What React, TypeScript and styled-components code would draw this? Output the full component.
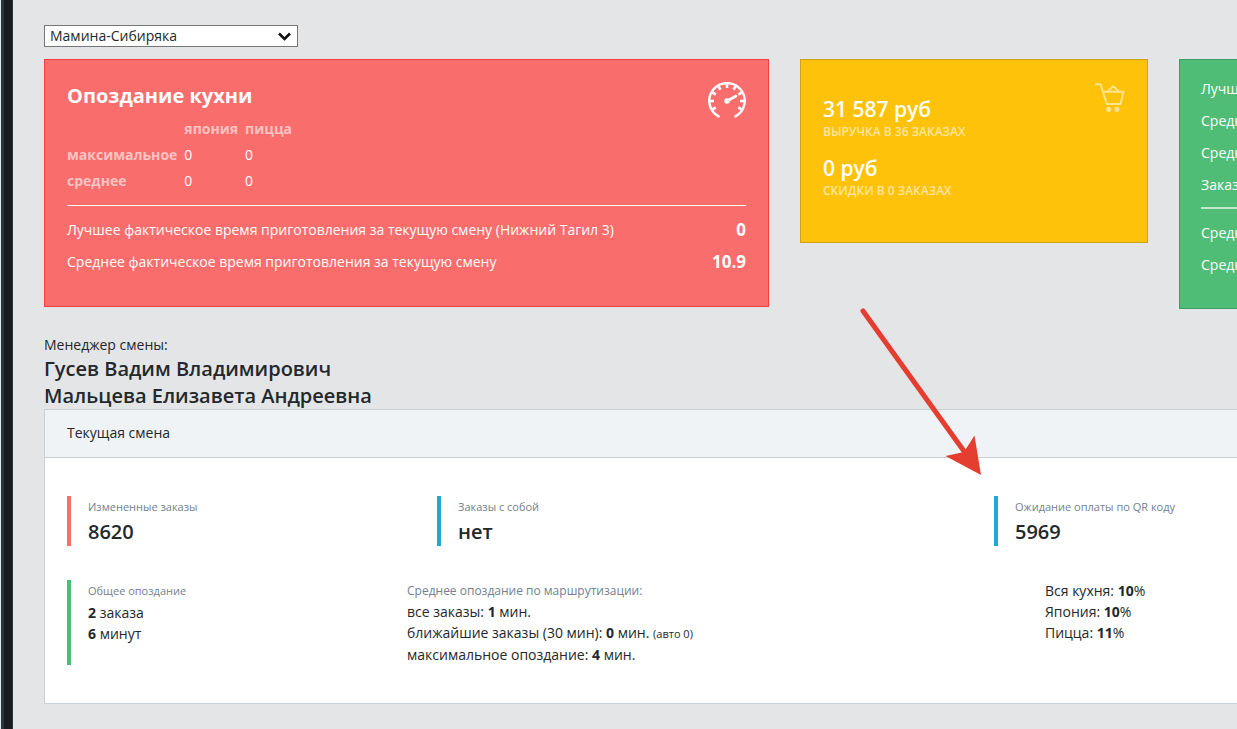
import React from "react";
import styled, { createGlobalStyle } from "styled-components";

const GlobalStyle = createGlobalStyle`
  *, *::before, *::after { box-sizing: border-box; }
  body {
    margin: 0;
    background: #e4e5e6;
    color: #23282c;
    font-family: "Open Sans", "Noto Sans", sans-serif;
    font-size: 14px;
    line-height: 21px;
    overflow-x: hidden;
  }
`;

const Page = styled.div`
  display: flex;
  min-height: 100vh;
`;

const SidebarEdge = styled.aside`
  flex: none;
  width: 13px;
  background: #181c20;
  border-left: 1px solid #e4e5e6;
  border-right: 1px solid #2f353a;
  box-shadow: inset 3px 0 0 #263640;
`;

const Main = styled.main`
  position: relative;
  flex: 1;
  min-width: 0;
  padding: 25px 0 25px 31px;
`;

const SelectBox = styled.div`
  position: relative;
  width: 254px;
  margin-bottom: 12px;
`;

const BranchSelect = styled.select`
  display: block;
  appearance: none;
  width: 100%;
  height: 22px;
  padding: 0 24px 0 5px;
  border: 1px solid #767676;
  border-radius: 0;
  background: #fff;
  color: #23282c;
  font: inherit;
  line-height: 20px;
`;

const Chevron = styled.svg`
  position: absolute;
  top: 7px;
  right: 7px;
  pointer-events: none;
`;

const Cards = styled.div`
  display: grid;
  grid-template-columns: minmax(0, 725fr) minmax(0, 348fr) minmax(0, 58fr);
  column-gap: 31px;
  align-items: start;
`;

const tones = {
  danger: { fill: "#f96d6c", edge: "#f5403e" },
  warning: { fill: "#ffc20a", edge: "#d2a11b" },
  success: { fill: "#4fbd75", edge: "#3e9f60" },
};

const Card = styled.section<{ $tone: keyof typeof tones; $open?: boolean }>`
  padding: 22px;
  border: 1px solid ${(p) => tones[p.$tone].edge};
  background: ${(p) => tones[p.$tone].fill};
  color: #fff;
  ${(p) => p.$open && "padding: 13px 0 27px 21px; border-right: 0; overflow: hidden;"}
`;

const CardTop = styled.div`
  display: flex;
  justify-content: space-between;
  align-items: flex-start;
`;

const CardTitle = styled.h2`
  margin: 0;
  font-size: 20px;
  line-height: 28px;
  font-weight: 700;
`;

const DelayTable = styled.table`
  border-collapse: collapse;
  margin-top: 6px;
  line-height: 26px;

  th, td {
    padding: 0 7px 0 0;
    text-align: left;
  }
  th {
    color: rgba(255, 255, 255, 0.6);
    font-weight: 700;
  }
`;

const Rule = styled.hr<{ $soft?: boolean }>`
  height: ${(p) => (p.$soft ? 2 : 1)}px;
  margin: ${(p) => (p.$soft ? 6 : 11)}px 0 8px;
  border: 0;
  background: ${(p) => (p.$soft ? "rgba(255, 255, 255, 0.65)" : "#fff")};
`;

const FactRow = styled.div`
  display: flex;
  justify-content: space-between;
  height: 32px;
  line-height: 32px;
  white-space: nowrap;

  strong {
    font-size: 17px;
    font-weight: 700;
  }
`;

const RedBody = styled.div`
  padding-bottom: 6px;
`;

const Money = styled.div`
  padding-bottom: 8px;

  strong {
    display: block;
    font-size: 21px;
    line-height: 26px;
    font-weight: 600;
  }
  span {
    display: block;
    color: rgba(255, 255, 255, 0.6);
    font-size: 12px;
    line-height: 20px;
    font-weight: 600;
    text-transform: uppercase;
  }
`;

const MoneyList = styled.div`
  display: grid;
  gap: 5px;
  padding: 14px 0 11px;
`;

const Managers = styled.section`
  margin-top: 25px;
`;

const ManagerName = styled.div`
  font-size: 20px;
  line-height: 27px;
  font-weight: 600;
`;

const Panel = styled.section`
  border: 1px solid #c8d0d5;
  border-right: 0;
  background: #fff;
`;

const PanelHeader = styled.header`
  padding: 11px 22px 13px;
  border-bottom: 1px solid #c8d0d5;
  background: #f0f3f5;
  line-height: 23px;
`;

const PanelBody = styled.div`
  padding: 38px 0 38px 22px;
`;

const StatRow = styled.div<{ $columns: string }>`
  display: grid;
  grid-template-columns: ${(p) => p.$columns};
  align-items: start;

  & + & {
    margin-top: 34px;
  }
`;

const Callout = styled.div<{ $color: string; $tall?: boolean }>`
  border-left: 4px solid ${(p) => p.$color};
  padding-left: 17px;
  min-height: ${(p) => (p.$tall ? 85 : 50)}px;
`;

const Label = styled.div`
  color: #73818f;
  font-size: 11px;
  line-height: 22px;
`;

const Value = styled.div`
  font-size: 20px;
  line-height: 27px;
  font-weight: 600;
`;

const Note = styled.div`
  color: #73818f;
  font-size: 12px;
`;

const Line = styled.div`
  white-space: nowrap;

  small {
    font-size: 11px;
  }
`;

const Pointer = styled.svg`
  position: absolute;
  top: 306px;
  left: 845px;
  pointer-events: none;
`;

const GaugeIcon = () => (
  <svg width="38" height="38" viewBox="1 0 38 38" fill="none" stroke="#fff" aria-hidden="true">
    <path d="M11.6 34.4A17.7 17.7 0 1 1 28.4 34.4" strokeWidth="2.4" strokeLinecap="round" />
    <g strokeWidth="2.6">
      {[-120, -90, -60, -30, 0, 30, 60, 90, 120].map((a) => (
        <path key={a} d="M20 2v4" transform={`rotate(${a} 20 19)`} />
      ))}
    </g>
    <path d="M20 19l9-5" strokeWidth="2.6" strokeLinecap="round" />
    <circle cx="20" cy="19" r="2.8" fill="#fff" stroke="none" />
  </svg>
);

const CartIcon = () => (
  <svg width="31" height="31" viewBox="0 0 31 31" fill="none" stroke="#ffe38f" strokeWidth="1.9" aria-hidden="true">
    <path d="M1.4 2.3h5.2L12.8 22h13.8l2.8-12.200H9.2M13.2 9.600l6-5.400 6 5.400" strokeLinejoin="round" strokeLinecap="round" />
    <circle cx="14.7" cy="27.300" r="2.600" fill="#ffe38f" stroke="none" />
    <circle cx="22.800" cy="27.300" r="2.600" fill="#ffe38f" stroke="none" />
  </svg>
);

export default function App() {
  return (
    <>
      <GlobalStyle />
      <Page>
        <SidebarEdge />
        <Main>
          <SelectBox>
            <BranchSelect aria-label="Филиал" defaultValue="1">
              <option value="1">Мамина-Сибиряка</option>
            </BranchSelect>
            <Chevron width="13" height="9" viewBox="0 0 13 9" fill="none" stroke="#111" strokeWidth="2.6" aria-hidden="true">
              <path d="M1 1.5l5.5 5.5L12 1.5" />
            </Chevron>
          </SelectBox>

          <Cards>
            <Card $tone="danger">
              <RedBody>
                <CardTop>
                  <div>
                    <CardTitle>Опоздание кухни</CardTitle>
                    <DelayTable>
                      <thead>
                        <tr><td /><th scope="col">япония</th><th scope="col">пицца</th></tr>
                      </thead>
                      <tbody>
                        <tr><th scope="row">максимальное</th><td>0</td><td>0</td></tr>
                        <tr><th scope="row">среднее</th><td>0</td><td>0</td></tr>
                      </tbody>
                    </DelayTable>
                  </div>
                  <GaugeIcon />
                </CardTop>
                <Rule />
                <FactRow>
                  <span>Лучшее фактическое время приготовления за текущую смену (Нижний Тагил 3)</span>
                  <strong>0</strong>
                </FactRow>
                <FactRow>
                  <span>Среднее фактическое время приготовления за текущую смену</span>
                  <strong>10.9</strong>
                </FactRow>
              </RedBody>
            </Card>

            <Card $tone="warning">
              <CardTop>
                <MoneyList>
                  <Money><strong>31 587 руб</strong><span>Выручка в 36 заказах</span></Money>
                  <Money><strong>0 руб</strong><span>Скидки в 0 заказах</span></Money>
                </MoneyList>
                <CartIcon />
              </CardTop>
            </Card>

            <Card $tone="success" $open>
              <FactRow>Лучшее</FactRow>
              <FactRow>Среднее</FactRow>
              <FactRow>Среднее</FactRow>
              <FactRow>Заказов</FactRow>
              <Rule $soft />
              <FactRow>Среднее</FactRow>
              <FactRow>Среднее</FactRow>
            </Card>
          </Cards>

          <Managers>
            <div>Менеджер смены:</div>
            <ManagerName>Гусев Вадим Владимирович</ManagerName>
            <ManagerName>Мальцева Елизавета Андреевна</ManagerName>
          </Managers>

          <Panel>
            <PanelHeader>Текущая смена</PanelHeader>
            <PanelBody>
              <StatRow $columns="370fr 557fr 243fr">
                <Callout $color="#f96d6c">
                  <Label>Измененные заказы</Label>
                  <Value>8620</Value>
                </Callout>
                <Callout $color="#20a8d8">
                  <Label>Заказы с собой</Label>
                  <Value>нет</Value>
                </Callout>
                <Callout $color="#20a8d8">
                  <Label>Ожидание оплаты по QR коду</Label>
                  <Value>5969</Value>
                </Callout>
              </StatRow>
              <StatRow $columns="340fr 638fr 192fr">
                <Callout $color="#4dbd74" $tall>
                  <Label>Общее опоздание</Label>
                  <Line><b>2</b> заказа</Line>
                  <Line><b>6</b> минут</Line>
                </Callout>
                <div>
                  <Note>Среднее опоздание по маршрутизации:</Note>
                  <Line>все заказы: <b>1</b> мин.</Line>
                  <Line>ближайшие заказы (30 мин): <b>0</b> мин. <small>(авто 0)</small></Line>
                  <Line>максимальное опоздание: <b>4</b> мин.</Line>
                </div>
                <div>
                  <Line>Вся кухня: <b>10</b>%</Line>
                  <Line>Япония: <b>10</b>%</Line>
                  <Line>Пицца: <b>11</b>%</Line>
                </div>
              </StatRow>
            </PanelBody>
          </Panel>

          <Pointer width="126" height="172" viewBox="0 0 126 172" aria-hidden="true">
            <path d="M5 5L108 148" stroke="#e53d30" strokeWidth="5" strokeLinecap="round" />
            <path d="M123 169L87.5 150L106 146L116.5 129.5Z" fill="#e53d30" />
          </Pointer>
        </Main>
      </Page>
    </>
  );
}
